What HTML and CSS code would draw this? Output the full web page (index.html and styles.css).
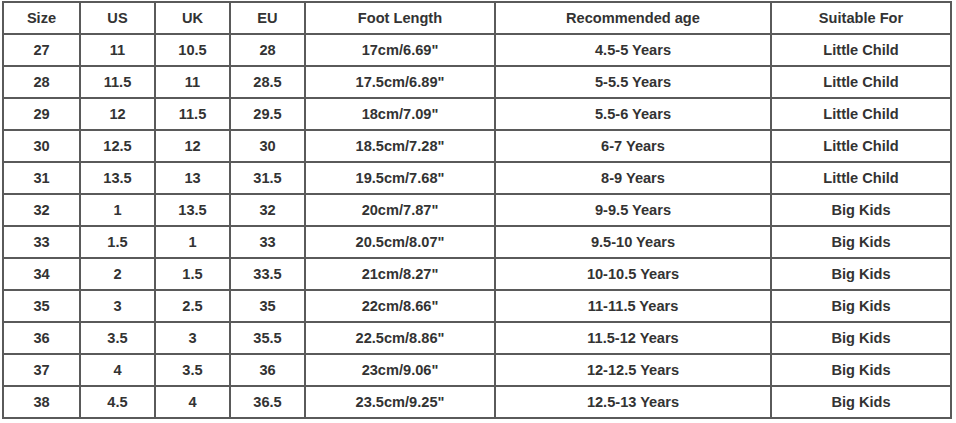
FILE: index.html
```html
<!DOCTYPE html>
<html>
<head>
<meta charset="utf-8">
<link rel="stylesheet" href="styles.css">
</head>
<body>
<table class="size-table">
  <colgroup>
    <col class="c-size"><col class="c-us"><col class="c-uk"><col class="c-eu"><col class="c-foot"><col class="c-age"><col class="c-for">
  </colgroup>
  <thead>
    <tr><th>Size</th><th>US</th><th>UK</th><th>EU</th><th>Foot Length</th><th>Recommended age</th><th>Suitable For</th></tr>
  </thead>
  <tbody>
    <tr><td>27</td><td>11</td><td>10.5</td><td>28</td><td>17cm/6.69"</td><td>4.5-5 Years</td><td>Little Child</td></tr>
    <tr><td>28</td><td>11.5</td><td>11</td><td>28.5</td><td>17.5cm/6.89"</td><td>5-5.5 Years</td><td>Little Child</td></tr>
    <tr><td>29</td><td>12</td><td>11.5</td><td>29.5</td><td>18cm/7.09"</td><td>5.5-6 Years</td><td>Little Child</td></tr>
    <tr><td>30</td><td>12.5</td><td>12</td><td>30</td><td>18.5cm/7.28"</td><td>6-7 Years</td><td>Little Child</td></tr>
    <tr><td>31</td><td>13.5</td><td>13</td><td>31.5</td><td>19.5cm/7.68"</td><td>8-9 Years</td><td>Little Child</td></tr>
    <tr><td>32</td><td>1</td><td>13.5</td><td>32</td><td>20cm/7.87"</td><td>9-9.5 Years</td><td>Big Kids</td></tr>
    <tr><td>33</td><td>1.5</td><td>1</td><td>33</td><td>20.5cm/8.07"</td><td>9.5-10 Years</td><td>Big Kids</td></tr>
    <tr><td>34</td><td>2</td><td>1.5</td><td>33.5</td><td>21cm/8.27"</td><td>10-10.5 Years</td><td>Big Kids</td></tr>
    <tr><td>35</td><td>3</td><td>2.5</td><td>35</td><td>22cm/8.66"</td><td>11-11.5 Years</td><td>Big Kids</td></tr>
    <tr><td>36</td><td>3.5</td><td>3</td><td>35.5</td><td>22.5cm/8.86"</td><td>11.5-12 Years</td><td>Big Kids</td></tr>
    <tr><td>37</td><td>4</td><td>3.5</td><td>36</td><td>23cm/9.06"</td><td>12-12.5 Years</td><td>Big Kids</td></tr>
    <tr><td>38</td><td>4.5</td><td>4</td><td>36.5</td><td>23.5cm/9.25"</td><td>12.5-13 Years</td><td>Big Kids</td></tr>
  </tbody>
</table>
</body>
</html>
```
FILE: styles.css
```css
html, body {
  margin: 0;
  padding: 0;
  background: #ffffff;
}
body {
  padding: 1px 0 0 2px;
}
.size-table {
  border-collapse: collapse;
  table-layout: fixed;
  width: 950px;
  font-family: "Liberation Sans", Arial, sans-serif;
  font-weight: bold;
  font-size: 14.6px;
  color: #333333;
}
.size-table th,
.size-table td {
  border: 2px solid #5a5a5a;
  height: 32px;
  padding: 0;
  text-align: center;
  vertical-align: middle;
  box-sizing: border-box;
  font-weight: bold;
}
.c-size { width: 77px; }
.c-us { width: 75px; }
.c-uk { width: 75px; }
.c-eu { width: 75px; }
.c-foot { width: 190px; }
.c-age { width: 276px; }
.c-for { width: 180px; }
```
